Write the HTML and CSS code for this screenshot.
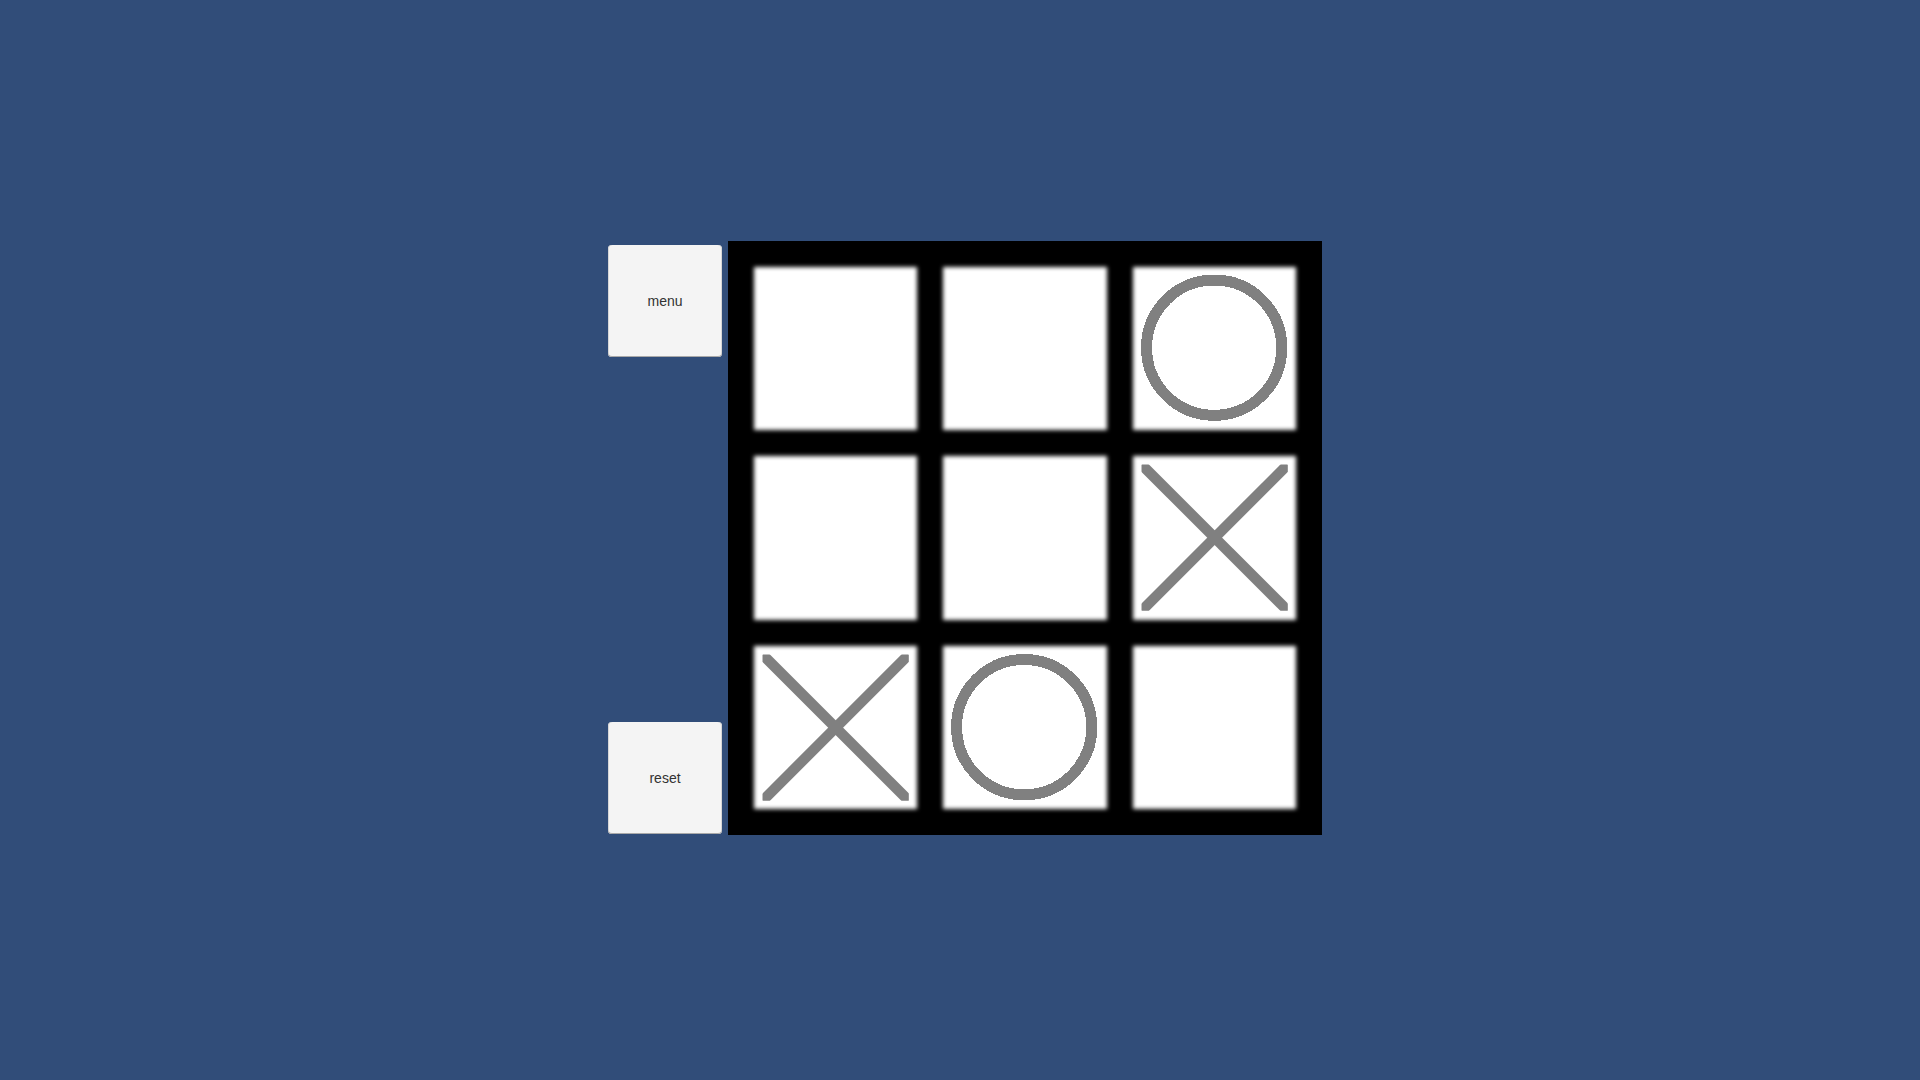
FILE: index.html
```html
<!DOCTYPE html>
<html>
<head>
<meta charset="utf-8">
<link rel="stylesheet" href="styles.css">
</head>
<body>
<div class="scene">
  <div class="side">
    <button class="btn">menu</button>
    <button class="btn">reset</button>
  </div>
  <div class="board">
    <div class="cell"></div>
    <div class="cell"></div>
    <div class="cell"><svg class="mark" viewBox="0 0 163 163" shape-rendering="crispEdges"><circle cx="81" cy="80.5" r="67.5" fill="none" stroke="#808080" stroke-width="11"/></svg></div>
    <div class="cell"></div>
    <div class="cell"></div>
    <div class="cell"><svg class="mark" viewBox="0 0 163 163"><svg x="8.5" y="8.5" width="146" height="146" viewBox="0 0 146 146"><line x1="0" y1="0" x2="146" y2="146" stroke="#808080" stroke-width="10.5"/><line x1="146" y1="0" x2="0" y2="146" stroke="#808080" stroke-width="10.5"/></svg></svg></div>
    <div class="cell"><svg class="mark" viewBox="0 0 163 163"><svg x="8.5" y="8.5" width="146" height="146" viewBox="0 0 146 146"><line x1="0" y1="0" x2="146" y2="146" stroke="#808080" stroke-width="10.5"/><line x1="146" y1="0" x2="0" y2="146" stroke="#808080" stroke-width="10.5"/></svg></svg></div>
    <div class="cell"><svg class="mark" viewBox="0 0 163 163" shape-rendering="crispEdges"><circle cx="81" cy="81" r="67.5" fill="none" stroke="#808080" stroke-width="11"/></svg></div>
    <div class="cell"></div>
  </div>
</div>
</body>
</html>
```

FILE: styles.css
```css
html, body {
  margin: 0;
  padding: 0;
  width: 100%;
  height: 100%;
  background: #314d79;
  overflow: hidden;
}

.scene {
  display: flex;
  gap: 6px;
  padding-top: 241px;
  padding-left: 608px;
}

.side {
  display: flex;
  flex-direction: column;
  justify-content: space-between;
  width: 114px;
  height: 594px;
  padding: 4px 0 1px;
  box-sizing: border-box;
}

.btn {
  width: 114px;
  height: 112px;
  margin: 0;
  padding: 0;
  border: none;
  border-radius: 4px;
  background: #f4f4f4;
  box-shadow: inset 0 -1px 0 #a9a9a9, inset 1px 0 0 #d6d6d6, inset -1px 0 0 #d6d6d6;
  color: #323232;
  font-family: "Liberation Sans", Arial, sans-serif;
  font-size: 14px;
  cursor: pointer;
}

.board {
  width: 594px;
  height: 594px;
  box-sizing: border-box;
  background: #000;
  padding: 26px;
  display: grid;
  grid-template-columns: repeat(3, 1fr);
  grid-template-rows: repeat(3, 1fr);
  gap: 26px;
}

.cell {
  position: relative;
}

.cell::before {
  content: "";
  position: absolute;
  inset: 0;
  background: #fff;
  filter: blur(2px);
}

.mark {
  position: relative;
  display: block;
  width: 100%;
  height: 100%;
}
```
